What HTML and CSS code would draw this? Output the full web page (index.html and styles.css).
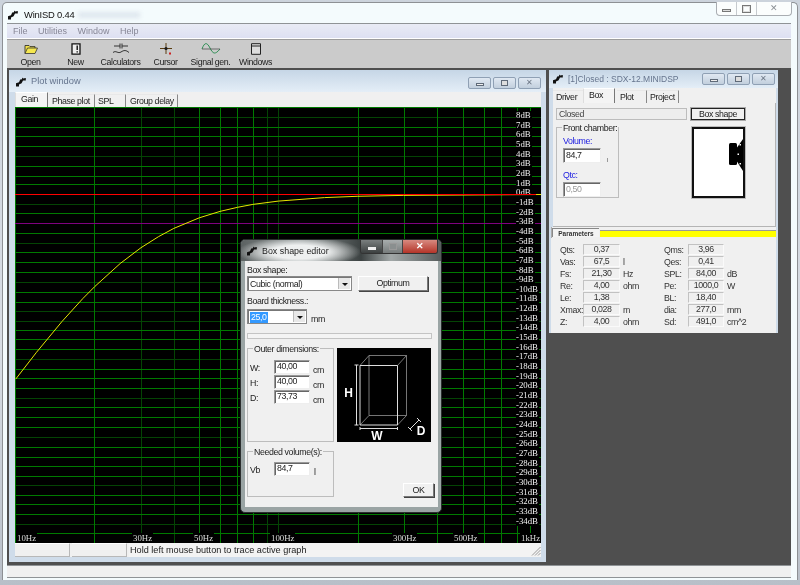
FILE: index.html
```html
<!DOCTYPE html>
<html lang="en">
<head>
<meta charset="utf-8">
<title>WinISD 0.44</title>
<link rel="stylesheet" href="styles.css">
</head>
<body>
<svg class="defs" width="0" height="0" aria-hidden="true"><symbol id="ico" viewBox="0 0 10 10"><path d="M0 9.500V6.200L3 5.200 4.200 2.600 6 2.200V.6L7 1.600 9.800 1 9.800 3.600 7 3.400 5.600 6.200 3 7.400V9.500Z"/></symbol></svg>
<div class="frame">
  <header class="titlebar">
    <svg class="ico"><use href="#ico"/></svg>
    <span class="apptitle">WinISD 0.44</span>
    <span class="smudge"></span>
    <div class="aero">
      <span class="a-min"><i></i></span><span class="a-max"><i></i></span><span class="a-close">✕</span>
    </div>
  </header>
  <div class="client">
    <nav class="menu"><span>File</span><span>Utilities</span><span>Window</span><span>Help</span></nav>
    <div class="toolbar">
      <div class="tool"><svg viewBox="0 0 20 12"><path d="M4 10.500V2.500H8L9 3.600H14V5" fill="#f3e24a" stroke="#222" stroke-width=".8"/><path d="M4 10.500L6.500 5H16.500L14 10.500Z" fill="#f6e84f" stroke="#333" stroke-width=".8"/></svg><span>Open</span></div>
      <div class="tool"><svg viewBox="0 0 20 12"><path d="M6 .8H14V11.200H6Z" fill="#eee" stroke="#111" stroke-width="1.300"/><path d="M11.200 2.500V7M11.200 8.300V9.600" stroke="#111" stroke-width="1.400"/></svg><span>New</span></div>
      <div class="tool"><svg viewBox="0 0 20 12"><path d="M3 3H9M11 3H17M9 .5V5.500M11 .5V5.500M2 9.500C5 7 7 11 10 9S15 7 18 9.500" fill="none" stroke="#333" stroke-width="1"/></svg><span>Calculators</span></div>
      <div class="tool"><svg viewBox="0 0 20 12"><path d="M10 0V11M4 5.500H16" stroke="#5a3c10" stroke-width="1"/><circle cx="10" cy="5.500" r="1.600" fill="#1a1a1a"/><rect x="13" y="9.500" width="2" height="2" fill="#c22"/></svg><span>Cursor</span></div>
      <div class="tool"><svg viewBox="0 0 20 12"><path d="M1 6C3.500 -1 6 -1 9 5S14 12 19 6" fill="none" stroke="#2f8f55" stroke-width="1"/><path d="M1 6H19" stroke="#444" stroke-width=".7"/></svg><span>Signal gen.</span></div>
      <div class="tool"><svg viewBox="0 0 20 12"><path d="M5.500 .7H14.500V11.300H5.500Z" fill="#ddd" stroke="#222" stroke-width="1"/><path d="M5.500 3H14.500" stroke="#222" stroke-width="1"/></svg><span>Windows</span></div>
    </div>
    <main class="mdi">

      <section class="win plotwin">
        <div class="wintitle">
          <svg class="ico"><use href="#ico"/></svg>
          <span class="wtext">Plot window</span>
          <div class="wbtns"><span><i class="m"></i></span><span><i class="x"></i></span><span class="c">✕</span></div>
        </div>
        <div class="tabs plot-tabs">
          <span class="tab on t-gain">Gain</span><span class="tab t-phase">Phase plot</span><span class="tab t-spl">SPL</span><span class="tab t-gd">Group delay</span>
        </div>
        <div class="plot">
          <svg class="grid" viewBox="15 107 526 436" width="526" height="436">
            <path class="g-dim" d="M15 117.500H541M15 156.500H541M15 204.500H541M15 243.500H541M15 282.500H541M15 311.500H541M15 321.500H541M15 359.500H541M15 398.500H541M15 437.500H541M15 485.500H541M15 524.500H541M141.500 107V543M174.500 107V543M267.500 107V543M278.500 107V543"/>
            <path class="g-on" d="M15 107.500H541M15.500 107V543M15 127.500H541M15 136.500H541M15 146.500H541M15 166.500H541M15 176.500H541M15 184.500H541M15 213.500H541M15 233.500H541M15 252.500H541M15 262.500H541M15 272.500H541M15 292.500H541M15 302.500H541M15 330.500H541M15 339.500H541M15 349.500H541M15 369.500H541M15 378.500H541M15 388.500H541M15 407.500H541M15 417.500H541M15 427.500H541M15 447.500H541M15 457.500H541M15 466.500H541M15 476.500H541M15 495.500H541M15 504.500H541M15 514.500H541M15 533.500H541M94.500 107V543M199.500 107V543M220.500 107V543M237.500 107V543M253.500 107V543M358.500 107V543M404.500 107V543M437.500 107V543M463.500 107V543M484.500 107V543M501.500 107V543M517.500 107V543M530.500 107V543"/>
            <path class="g-purple" d="M15 223.500H541"/>
          </svg>
          <div class="dbs">
            <span>8dB</span><span>7dB</span><span>6dB</span><span>5dB</span><span>4dB</span><span>3dB</span><span>2dB</span><span>1dB</span><span>0dB</span><span>-1dB</span><span>-2dB</span><span>-3dB</span><span>-4dB</span><span>-5dB</span><span>-6dB</span><span>-7dB</span><span>-8dB</span><span>-9dB</span><span>-10dB</span><span>-11dB</span><span>-12dB</span><span>-13dB</span><span>-14dB</span><span>-15dB</span><span>-16dB</span><span>-17dB</span><span>-18dB</span><span>-19dB</span><span>-20dB</span><span>-21dB</span><span>-22dB</span><span>-23dB</span><span>-24dB</span><span>-25dB</span><span>-26dB</span><span>-27dB</span><span>-28dB</span><span>-29dB</span><span>-30dB</span><span>-31dB</span><span>-32dB</span><span>-33dB</span><span>-34dB</span>
          </div>
          <div class="hzs">
            <span class="hz h10">10Hz</span><span class="hz h30">30Hz</span><span class="hz h50">50Hz</span><span class="hz h100">100Hz</span><span class="hz h300">300Hz</span><span class="hz h500">500Hz</span><span class="hz h1k">1kHz</span>
          </div>
          <svg class="curves" viewBox="15 107 526 436" width="526" height="436">
            <polyline class="c-yellow" points="15.700,379.100 36.500,352.300 61.900,321.600 82.700,298.700 94.800,286.500 120.200,263.500 141,247.700 158.600,236.600 173.800,228.400 199.300,217.800 220,211.400 237.600,207.300 252.900,204.400 278.300,201.100 324.500,197.600 357.200,196.300 403.500,195.400 541,194.500"/>
            <path class="c-red" d="M15 194.500H536"/>
          </svg>
        </div>
        <footer class="plotstatus">
          <span class="panel"></span><span class="panel"></span>
          <span class="panel msg">Hold left mouse button to trace active graph</span>
          <svg class="grip" viewBox="0 0 10 10"><path d="M9.500 1L1 9.500M9.500 4L4 9.500M9.500 7L7 9.500" stroke="#999"/></svg>
        </footer>
      </section>

      <section class="win drvwin">
        <div class="wintitle drvtitle">
          <svg class="ico"><use href="#ico"/></svg>
          <span class="wtext">[1]Closed : SDX-12.MINIDSP</span>
          <div class="wbtns"><span><i class="m"></i></span><span><i class="x"></i></span><span class="c">✕</span></div>
        </div>
        <div class="tabs drv-tabs">
          <span class="tab t-driver">Driver</span><span class="tab on t-box">Box</span><span class="tab t-plot">Plot</span><span class="tab t-project">Project</span>
        </div>
        <div class="boxpanel">
          <div class="boxrow">
            <span class="closedfield">Closed</span>
            <span class="btn boxshape">Box shape</span>
          </div>
          <div class="boxrow2">
            <div class="grp front">
              <span class="legend">Front chamber:</span>
              <div class="blue">Volume:</div>
              <div class="inrow"><span class="field f-vol">84,7</span><span class="tick"></span></div>
              <div class="blue">Qtc:</div>
              <span class="field f-vol off">0,50</span>
            </div>
            <div class="boxpic">
              <svg viewBox="0 0 49 67" width="49" height="67">
                <rect x="35" y="14" width="8" height="22" rx="1.500"/>
                <path d="M42 20L49 10V42L42 31Z"/>
                <path class="dots" d="M45.500 15h1.500v1.500h-1.500ZM43.500 24.500h1.500v1.500h-1.500ZM45.500 34h1.500v1.500h-1.500Z"/>
              </svg>
            </div>
          </div>
        </div>
        <div class="paramstrip"><span class="ptab">Parameters</span><span class="pbar"></span></div>
        <div class="params">
          <span>Qts:</span><span class="val">0,37</span><span class="u"></span><span>Qms:</span><span class="val">3,96</span><span class="u"></span>
          <span>Vas:</span><span class="val">67,5</span><span class="u">l</span><span>Qes:</span><span class="val">0,41</span><span class="u"></span>
          <span>Fs:</span><span class="val">21,30</span><span class="u">Hz</span><span>SPL:</span><span class="val">84,00</span><span class="u">dB</span>
          <span>Re:</span><span class="val">4,00</span><span class="u">ohm</span><span>Pe:</span><span class="val">1000,0</span><span class="u">W</span>
          <span>Le:</span><span class="val">1,38</span><span class="u"></span><span>BL:</span><span class="val">18,40</span><span class="u"></span>
          <span>Xmax:</span><span class="val">0,028</span><span class="u">m</span><span>dia:</span><span class="val">277,0</span><span class="u">mm</span>
          <span>Z:</span><span class="val">4,00</span><span class="u">ohm</span><span>Sd:</span><span class="val">491,0</span><span class="u">cm^2</span>
        </div>
      </section>

      <section class="dialog">
        <div class="dlgtitle">
          <svg class="ico"><use href="#ico"/></svg>
          <span class="dtext">Box shape editor</span>
          <div class="dbtns"><span class="d-min"><i></i></span><span class="d-max"><i></i></span><span class="d-close">✕</span></div>
        </div>
        <div class="dlgbody">
          <div class="lbl">Box shape:</div>
          <div class="row r-shape">
            <div class="combo c-shape"><span class="ctext">Cubic (normal)</span><span class="arrow"></span></div>
            <span class="btn optimum">Optimum</span>
          </div>
          <div class="lbl l-board">Board thickness.:</div>
          <div class="row r-board">
            <div class="combo c-board"><span class="ctext"><b class="sel">25,0</b></span><span class="arrow"></span></div>
            <span class="unit-mm">mm</span>
          </div>
          <div class="sep"></div>
          <div class="row r-outer">
            <div class="grp outer">
              <span class="legend">Outer dimensions:</span>
              <div class="dim"><span class="dl">W:</span><span class="field f-dim">40,00</span><span class="dunit">cm</span></div>
              <div class="dim"><span class="dl">H:</span><span class="field f-dim">40,00</span><span class="dunit">cm</span></div>
              <div class="dim"><span class="dl">D:</span><span class="field f-dim">73,73</span><span class="dunit">cm</span></div>
            </div>
            <div class="boxdiagram">
              <svg viewBox="0 0 94 94" width="94" height="94">
                <g class="thin">
                  <path d="M32 7.500H69.500V67.500H32ZM32 7.500L23 17.500M69.500 7.500L60.500 17.500M69.500 67.500L60.500 77M32 67.500L23 77"/>
                </g>
                <g class="thick">
                  <path d="M23 17.500H60.500V77H23ZM19.500 17V77M17.500 17H21.500M17.500 77H21.500M23 80.500H60.500M23 79V82M60.500 79V82M73 81L82 72M71 79L75 83M80 70L84 74"/>
                </g>
                <text x="11.500" y="48.500" class="dg">H</text>
                <text x="40" y="92" class="dg">W</text>
                <text x="84" y="86.500" class="dg">D</text>
              </svg>
            </div>
          </div>
          <div class="row r-need">
            <div class="grp need">
              <span class="legend">Needed volume(s):</span>
              <div class="dim"><span class="dl">Vb</span><span class="field f-dim">84,7</span><span class="dunit dl2">l</span></div>
            </div>
            <span class="btn ok">OK</span>
          </div>
        </div>
      </section>

    </main>
    <footer class="appstatus"></footer>
  </div>
</div>
</body>
</html>
```
FILE: styles.css
```css
* { box-sizing: border-box; }
html, body { margin: 0; height: 100%; overflow: hidden; }
body {
  width: 800px; height: 585px; position: relative;
  background: linear-gradient(180deg, #ccd3dc, #d8dde4 60%, #b8bfc8);
  font: 8.8px/1 "Liberation Sans", Arial, sans-serif; letter-spacing: -.38px; color: #222;
}
.defs { position: absolute; }
.frame {
  margin: 2px 0 0 2px; width: 796px; height: 578px;
  border: 1px solid #8d9094; border-bottom: 0; border-radius: 5px 5px 0 0;
  padding: 0 6px 2px 4px; background: #f4fbfd;
  display: flex; flex-direction: column;
  filter: blur(.3px);
}
.ico { width: 10px; height: 10px; fill: #111; flex: none; }
.titlebar { height: 20px; display: flex; align-items: center; position: relative; padding: 3px 0 0 1px; flex: none; }
.apptitle { margin-left: 6px; font-size: 9.4px; letter-spacing: -.2px; color: #111; }
.smudge { margin-left: 4px; width: 62px; height: 6px; background: #dfe7ee; filter: blur(2px); }
.aero { position: absolute; top: -1px; right: -1px; display: flex; height: 14px; border: 1px solid #a9adb2; border-top: 0; border-radius: 0 0 4px 4px; background: #fbfdfd; }
.aero span { display: flex; align-items: center; justify-content: center; border-right: 1px solid #c6cace; color: #8a8f94; font-size: 9px; }
.a-min { width: 20px; } .a-max { width: 20px; } .a-close { width: 34px; border-right: 0 !important; }
.a-min i { width: 9px; height: 3px; margin-top: 4px; border: 1px solid #777; background: #ddd; }
.a-max i { width: 9px; height: 8px; border: 1px solid #777; box-shadow: inset 0 0 0 1px #ddd; }

.client { flex: 1; display: flex; flex-direction: column; border-top: 1px solid #8f9396; min-height: 0; width: 784px; }
.menu { height: 14px; flex: none; display: flex; align-items: center; padding-left: 6px; gap: 10.5px; font-size: 9px; letter-spacing: 0; color: #878797; background: linear-gradient(180deg, #e9ebf5, #dde0f2); }
.toolbar { height: 30px; flex: none; display: flex; padding: 1px 0 0 1px; background: #cbcbcb; border-top: 1px solid #fff; box-shadow: inset 0 1px 0 #9c9c9c; }
.tool { width: 45px; display: flex; flex-direction: column; align-items: center; gap: 2.5px; padding-top: 3px; color: #222; }
.tool svg { height: 12px; width: 20px; }
.tool span { white-space: nowrap; }

.mdi { flex: 1; position: relative; background: #4f4f4f; min-height: 0; }
.appstatus { height: 13px; flex: none; background: #f0f0f0; border-top: 1px solid #8f9396; border-bottom: 1px solid #8f9396; }

.win { position: absolute; display: flex; flex-direction: column; background: #cfdcea; }
.plotwin { left: 2px; top: 2px; width: 537px; height: 492px; padding: 0 5px 5px 6px; border-radius: 4px 4px 0 0; }
.drvwin { left: 542px; top: 2px; width: 229px; height: 263px; padding: 0 2px 0 4px; border-radius: 4px 4px 0 0; }
.wintitle { height: 22px; flex: none; display: flex; align-items: center; position: relative; margin: 0 -5px 0 -6px; padding: 2px 0 0 7px; background: linear-gradient(180deg, #c6d6e6, #e4eef7); }
.drvtitle { height: 18px; margin: 0 -2px 0 -4px; padding: 0 0 0 4px; }
.wtext { margin-left: 5px; font-size: 9.3px; letter-spacing: 0; color: #66758e; }
.drvtitle .wtext { font-size: 8.5px; }
.wbtns { position: absolute; right: 5px; top: 7px; display: flex; gap: 2px; }
.drvtitle .wbtns { right: 3px; top: 3px; }
.wbtns span { width: 23px; height: 12px; border: 1px solid #8fa0b4; border-radius: 2px; background: linear-gradient(180deg, #e0e8f2, #c2cfdd); display: flex; align-items: center; justify-content: center; color: #6c7785; font-size: 8px; }
.wbtns .m { width: 8px; height: 3px; margin-top: 3px; border: 1px solid #5f6a78; background: #eee; }
.wbtns .x { width: 7px; height: 6px; border: 1px solid #5f6a78; background: #ddd; }

.tabs { display: flex; flex: none; background: #f0f0f0; align-items: flex-end; }
.plot-tabs { height: 15px; }
.drv-tabs { height: 15px; }
.tab { height: 13px; display: flex; align-items: center; padding-left: 3px; border-right: 1px solid #888; border-top: 1px solid #e8e8e8; white-space: nowrap; color: #222; }
.tab.on { height: 15px; background: #f4f4f4; border-top: 1px solid #fff; border-left: 1px solid #ddd; border-right: 1px solid #777; padding: 0 0 2px 5px; }
.t-gain { width: 33px; margin-right: 1px; } .t-phase { width: 46px; } .t-spl { width: 31px; margin-right: 1px; } .t-gd { width: 51px; }
.t-driver { width: 30px; border-right: 0; } .t-box { width: 32px; margin-right: 2px; } .t-plot { width: 30px; } .t-project { width: 32px; }

.plot { position: relative; width: 526px; height: 436px; flex: none; background: #000; overflow: hidden; }
.plot svg { position: absolute; left: 0; top: 0; display: block; }
.grid path { fill: none; stroke-width: 1; shape-rendering: crispEdges; }
.g-on { stroke: #007a00; }
.g-dim { stroke: #044404; }
.g-purple { stroke: #800080; }
.c-yellow { fill: none; stroke: #e6e600; stroke-width: 1; }
.c-red { stroke: #ff0000; stroke-width: 1; fill: none; shape-rendering: crispEdges; }
.dbs { position: absolute; left: 501px; top: 4px; display: flex; flex-direction: column; align-items: flex-start; font: 8.8px "Liberation Serif", "Times New Roman", serif; letter-spacing: 0; color: #f0f0f0; }
.dbs span { height: 9.67px; line-height: 9.67px; background: #000; white-space: nowrap; padding-right: 1px; }
.hzs { position: absolute; left: 0; right: 0; bottom: 0; height: 10px; font: 8.8px/10px "Liberation Serif", "Times New Roman", serif; letter-spacing: 0; color: #dcdcdc; }
.hz { position: absolute; top: 0; background: #000; padding: 0 1px; }
.h10 { left: 1px; } .h30 { left: 117px; } .h50 { left: 178px; } .h100 { left: 255px; } .h300 { left: 377px; } .h500 { left: 438px; } .h1k { left: 505px; }

.plotstatus { height: 14px; flex: none; display: flex; gap: 2px; position: relative; background: #f0f0f0; }
.panel { width: 55px; border-right: 1px solid #b8b8b8; border-bottom: 1px solid #b8b8b8; border-top: 1px solid #fff; }
.panel.msg { flex: 1; width: auto; border: 0; background: #f3f3f3; padding: 3px 0 0 1px; font-size: 9.15px; letter-spacing: 0; color: #222; }
.grip { position: absolute; right: 0; bottom: 1px; width: 10px; height: 10px; }

.boxpanel { height: 124px; flex: none; background: #f0f0f0; padding: 5px 0 0 3px; border: 1px solid #b4b4b4; border-width: 0 1px 1px 0; }
.boxrow { display: flex; gap: 4px; align-items: center; }
.closedfield { width: 131px; height: 12px; border: 1px solid #bcbcbc; background: #ededed; padding: 1px 0 0 2px; color: #444; }
.btn { display: flex; align-items: center; justify-content: center; background: #f0f0f0; color: #222; border: 1px solid #777; border-top-color: #fff; border-left-color: #fff; box-shadow: 1px 1px 0 #444; }
.boxshape { width: 54px; height: 12px; border: 1px solid #222; box-shadow: 0 0 0 1px #aaa; }
.boxrow2 { display: flex; margin-top: 7px; gap: 73px; }
.grp { border: 1px solid #bdbdbd; position: relative; }
.legend { position: absolute; top: -4px; left: 5px; padding: 0 1px; background: #f0f0f0; color: #222; white-space: nowrap; line-height: 8px; }
.front { width: 63px; height: 71px; padding: 9px 0 0 6px; }
.blue { color: #2020e0; height: 10px; }
.inrow { display: flex; align-items: flex-end; gap: 6px; margin: 1px 0 8px; }
.tick { width: 1px; height: 4px; background: #999; margin-bottom: 1px; }
.field { display: block; height: 15px; background: #fff; border: 1px solid #999; border-right-color: #eee; border-bottom-color: #eee; box-shadow: inset 1px 1px 0 #666; padding: 2px 0 0 2px; color: #222; }
.f-vol { width: 38px; }
.off { color: #999; margin-top: 1px; }
.boxpic { width: 53px; height: 71px; border: 2px solid #111; background: #fff; box-shadow: 0 0 0 1px #bbb; }
.boxpic svg { display: block; fill: #000; }
.boxpic .dots { fill: #fff; }

.paramstrip { height: 11px; flex: none; display: flex; align-items: flex-end; background: #f0f0f0; padding: 0 0 1px; gap: 1px; border-left: 1px solid #aaa; margin-left: -2px; }
.ptab { width: 47px; height: 9px; font-size: 6.5px; letter-spacing: 0; text-align: center; line-height: 9px; background: #f4f4f4; border-top: 1px solid #888; border-left: 1px solid #888; font-weight: bold; color: #333; }
.pbar { flex: 1; height: 7px; background: #ffff00; border-top: 1px solid #999; }
.params { flex: 1; background: #f0f0f0; display: grid; grid-template-columns: 23px 37px 44px 24px 36px 1fr; grid-auto-rows: 12px; padding: 6px 0 0 9px; align-content: start; color: #333; margin-left: -2px; }
.params > span { display: flex; align-items: center; white-space: nowrap; }
.params .val { justify-content: center; height: 11px; border: 1px solid #c2c2c2; border-bottom-color: #fafafa; border-right-color: #fafafa; }
.params .u { padding-left: 3px; }

.dialog { position: absolute; left: 233px; top: 171px; width: 202px; height: 274px; border: 1px solid #2a2e2e; border-radius: 5px; padding: 0 3px 5px 4px; display: flex; flex-direction: column; background: #9aa4a4; }
.dlgtitle { height: 21px; margin: 0 -3px 0 -4px; padding: 1px 0 0 6px; display: flex; align-items: center; position: relative; flex: none; border-radius: 4px 4px 0 0; background: radial-gradient(ellipse 62px 15px at 58px 12px, #eef0f0 45%, rgba(238,240,240,0) 100%), linear-gradient(90deg, #5c6262, #8f9696 30%, #3c4242 60%, #a2a8a8 75%, #565c5c); }
.dtext { margin-left: 5px; font-size: 8.9px; letter-spacing: 0; color: #222; }
.dbtns { position: absolute; right: 3px; top: 0; display: flex; height: 14px; border: 1px solid #333; border-top: 0; border-radius: 0 0 3px 3px; overflow: hidden; }
.dbtns span { display: flex; align-items: center; justify-content: center; color: #fff; font-size: 9px; border-right: 1px solid #444; }
.d-min { width: 22px; background: linear-gradient(180deg, #7a7f7f, #3c4040); }
.d-min i { width: 8px; height: 3px; background: #eee; margin-top: 3px; }
.d-max { width: 20px; background: linear-gradient(180deg, #a8adad, #777c7c); }
.d-max i { width: 8px; height: 7px; border: 1px solid #999; background: #8a8f8f; }
.d-close { width: 34px; border-right: 0 !important; font-weight: bold; background: linear-gradient(180deg, #d88a80, #b43428); }

.dlgbody { flex: 1; background: #f0f0f0; padding: 5px 5px 0 2px; display: flex; flex-direction: column; min-height: 0; }
.lbl { height: 10px; color: #222; }
.row { display: flex; }
.r-shape { gap: 6px; align-items: flex-start; }
.combo { height: 15px; display: flex; background: #fff; border: 1px solid #888; box-shadow: inset 1px 1px 0 #777; padding: 1px 1px 1px 2px; color: #222; }
.c-shape { width: 105px; }
.c-board { width: 60px; }
.ctext { flex: 1; padding-top: 2px; white-space: nowrap; }
.sel { font-weight: normal; background: #3399ff; color: #fff; padding: 1px 1px; display: inline-block; margin-top: -2px; }
.arrow { width: 12px; background: #e8e8e8; border-left: 1px solid #bbb; position: relative; }
.arrow::after { content: ""; position: absolute; left: 3px; top: 5px; border: 3px solid transparent; border-top-color: #111; border-bottom: 0; }
.optimum { width: 70px; height: 15px; }
.l-board { margin-top: 6px; }
.r-board { margin-top: 2px; height: 15px; }
.unit-mm { margin: 6px 0 0 4px; }
.sep { height: 6px; margin-top: 9px; width: 185px; border: 1px solid #c4c4c4; background: #f4f4f4; flex: none; }
.r-outer { margin-top: 9px; gap: 3px; }
.outer { width: 87px; height: 94px; padding: 11px 0 0 2px; display: flex; flex-direction: column; }
.need { width: 87px; height: 46px; padding: 10px 0 0 2px; }
.dim { display: flex; align-items: flex-start; height: 15px; }
.dl { width: 24px; padding-top: 4px; }
.f-dim { width: 36px; height: 14px; padding-top: 1px; }
.dunit { margin-left: 3px; padding-top: 6px; }
.dl2 { margin-left: 4px; padding-top: 6px; }
.boxdiagram { width: 94px; height: 94px; background: #000; }
.boxdiagram svg { display: block; }
.thin path { fill: none; stroke: #a8a8a8; stroke-width: .7; }
.thick path { fill: none; stroke: #dedede; stroke-width: 1; }
.dg { fill: #fff; font: bold 12px "Liberation Sans", Arial, sans-serif; letter-spacing: 0; text-anchor: middle; }
.r-need { margin-top: 9px; position: relative; }
.ok { position: absolute; left: 156px; top: 32px; width: 31px; height: 14px; }
```
